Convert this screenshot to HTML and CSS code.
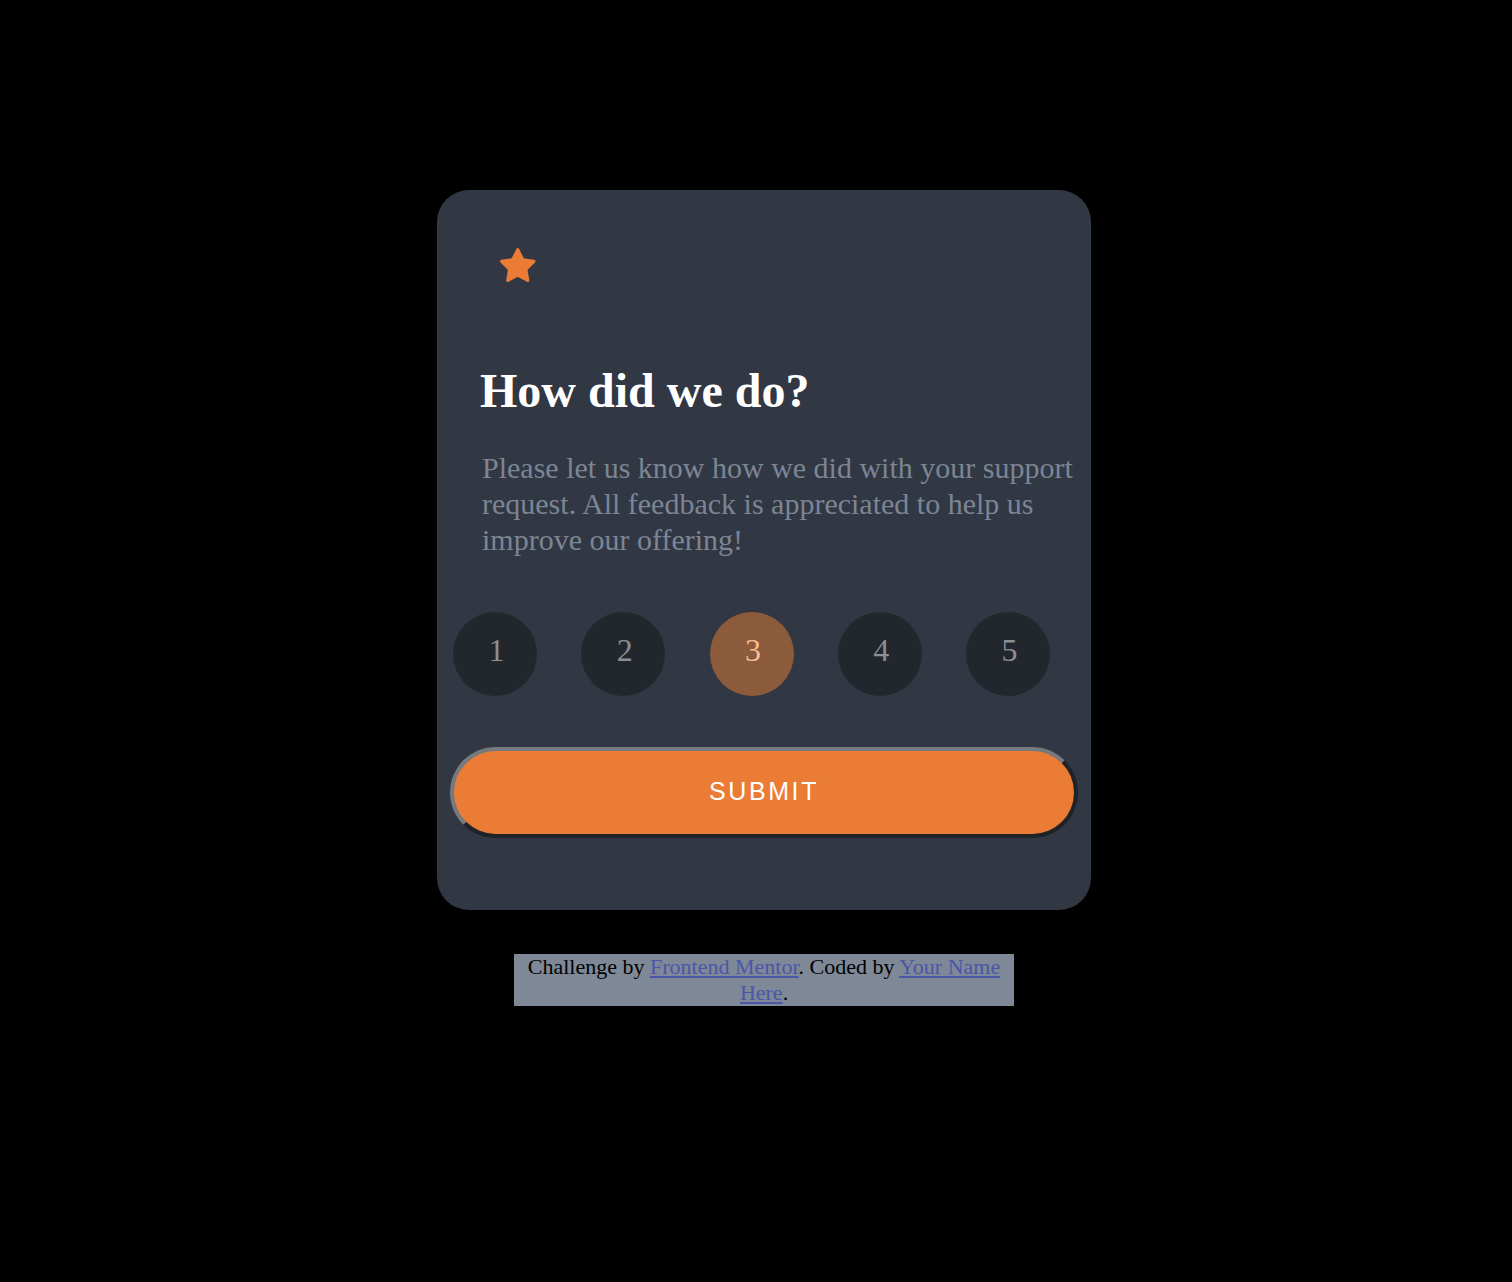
FILE: index.html
```
<!DOCTYPE html>
<html lang="en">
<head>
<meta charset="utf-8">
<title>Interactive rating component</title>
<link rel="stylesheet" href="styles.css">
</head>
<body>
<main class="page">
  <section class="card">
    <div class="star">
      <svg width="36" height="34" viewBox="0 0 17 16" xmlns="http://www.w3.org/2000/svg"><path d="m9.067.43 1.99 4.031c.112.228.33.386.58.422l4.45.647a.772.772 0 0 1 .427 1.316l-3.22 3.138a.773.773 0 0 0-.222.683l.76 4.431a.772.772 0 0 1-1.12.813l-3.980-2.092a.773.773 0 0 0-.718 0l-3.98 2.092a.772.772 0 0 1-1.119-.813l.76-4.431a.77.77 0 0 0-.222-.683L.233 6.846A.772.772 0 0 1 .661 5.53l4.449-.647a.772.772 0 0 0 .58-.422L7.68.43a.774.774 0 0 1 1.387 0Z" fill="#ea7c35"/></svg>
    </div>
    <h1 class="title">How did we do?</h1>
    <p class="text">Please let us know how we did with your support request. All feedback is appreciated to help us improve our offering!</p>
    <div class="ratings">
      <span class="rate">1</span>
      <span class="rate">2</span>
      <span class="rate rate-active">3</span>
      <span class="rate">4</span>
      <span class="rate">5</span>
    </div>
    <button class="submit" type="button">SUBMIT</button>
  </section>
  <footer class="attribution">
    Challenge by <a href="#">Frontend Mentor</a>. Coded by <a href="#">Your Name Here</a>.
  </footer>
</main>
</body>
</html>
```
FILE: styles.css
```
html, body {
  margin: 0;
  padding: 0;
  background: #000;
}

.page {
  display: flex;
  flex-direction: column;
  align-items: center;
  padding-top: 190px;
  padding-left: 16px;
  min-height: 1092px;
  font-family: "Liberation Serif", "Times New Roman", serif;
}

.card {
  width: 654px;
  box-sizing: border-box;
  background: #313743;
  border-radius: 32px;
  padding: 58px 0 72px 0;
  display: flex;
  flex-direction: column;
  align-items: flex-start;
}

.star {
  margin-left: 63px;
  width: 36px;
  height: 34px;
  display: flex;
}

.title {
  margin: 81px 0 0 43px;
  font-size: 48px;
  line-height: 55px;
  font-weight: 700;
  color: #ffffff;
}

.text {
  margin: 32px 0 0 45px;
  width: 609px;
  font-size: 30px;
  line-height: 36px;
  color: #7c8594;
}

.ratings {
  margin: 54px 0 0 16px;
  width: 597px;
  display: flex;
  justify-content: space-between;
}

.rate {
  width: 84px;
  height: 84px;
  border-radius: 50%;
  background: #22272e;
  color: #8a8e95;
  font-size: 32px;
  display: flex;
  align-items: center;
  justify-content: center;
  box-sizing: border-box;
  padding: 0 0 7px 3px;
}

.rate-active {
  background: #8c5b3b;
  color: #f7bd91;
}

.submit {
  margin: 51px 0 0 13px;
  width: 628px;
  height: 91px;
  box-sizing: border-box;
  border: 4px solid;
  border-color: #76797d #1f2227 #1f2227 #76797d;
  border-radius: 46px;
  background: #ea7c35;
  color: #ffffff;
  font-family: "Liberation Sans", Arial, sans-serif;
  font-size: 25px;
  letter-spacing: 2.6px;
  padding: 0 0 2px 0;
}

.attribution {
  margin-top: 44px;
  width: 500px;
  background: #7f8896;
  color: #000;
  font-size: 22px;
  line-height: 26px;
  text-align: center;
}

.attribution a {
  color: #4a56a8;
}
```
